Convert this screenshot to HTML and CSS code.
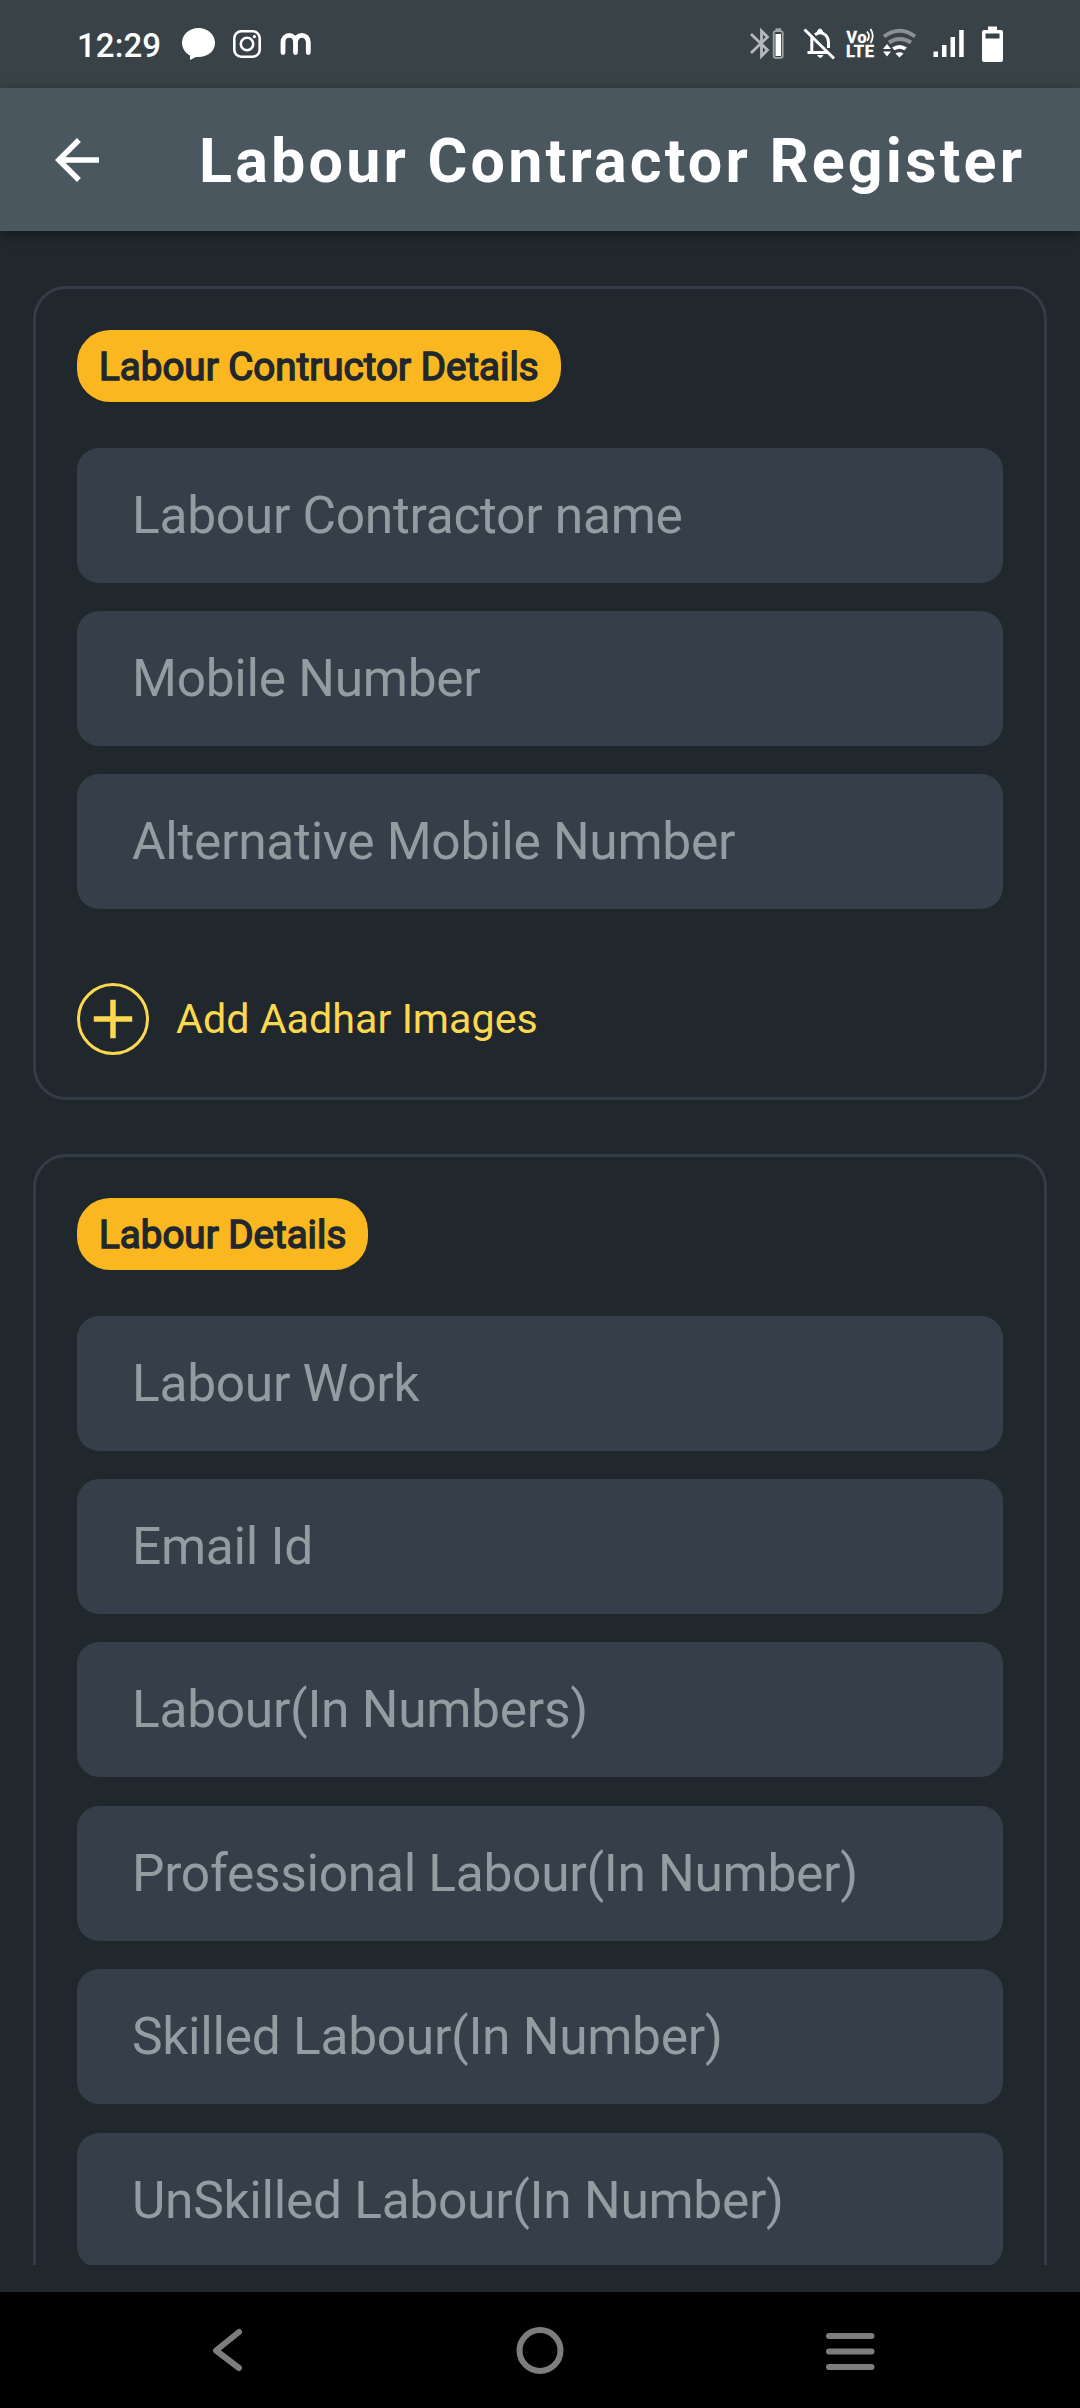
FILE: index.html
```html
<!DOCTYPE html>
<html lang="en">
<head>
<meta charset="utf-8">
<title>Labour Contractor Register</title>
<link rel="stylesheet" href="styles.css">
</head>
<body>
<div class="status-bar">
  <div class="status-left">
    <span class="clock">12:29</span>
    <svg class="notif" width="132" height="34" viewBox="182 27 132 34">
      <path fill="#fff" d="M198.500 28c-9.200 0-16.500 6.500-16.500 14.800 0 5.400 3.200 10.200 8 12.700v4.500l6-3.100c12 .9 19-5.500 19-14.100 0-8.300-7.300-14.800-16.500-14.800z"/>
      <g fill="none" stroke="#fff" stroke-width="2.600">
        <rect x="234.300" y="31.300" width="25.400" height="25.400" rx="7"/>
        <circle cx="247" cy="44" r="6.200"/>
      </g>
      <circle cx="254.400" cy="36.600" r="1.700" fill="#fff"/>
      <path fill="none" stroke="#fff" stroke-width="4.800" stroke-linecap="round" d="M283 52.500v-10.500a6.200 6.500 0 0 1 12.500 0v10.500m0-10.500a6.200 6.500 0 0 1 12.800 0v10.500"/>
    </svg>
  </div>
  <svg class="indicators" width="256" height="38" viewBox="749 25 256 38">
    <path fill="none" stroke="#b4b9bb" stroke-width="2.800" d="M751 34l16.500 16-6 6v-25l6 6-16.500 16"/>
    <rect x="773.700" y="31.200" width="9" height="26.600" rx="2" fill="none" stroke="#a1a6a9" stroke-width="1.800"/>
    <path fill="#a1a6a9" d="M775.500 28.300h5.500v2.700h-5.500z"/>
    <path fill="#fff" d="M775.500 34h5.500v22h-5.500z"/>
    <g fill="none" stroke="#fff" stroke-width="3">
      <path d="M804.500 29.500l29.500 29"/>
      <path d="M811.800 37.500v15M807.500 52.500h20M815 34.800c6-4.500 13.500-.5 13.500 8.200v5"/>
    </g>
    <path fill="#fff" d="M817 33.500v-2.500q3-5 6 0v2.500zM817 55h6.500q-3.200 6-6.500 0z"/>
    <text class="volte" x="846.500" y="42.500" textLength="20">Vo</text>
    <text class="lte" x="846" y="57.300" textLength="28">LTE</text>
    <path fill="none" stroke="#fff" stroke-width="1.800" d="M867 31.500q4 4.500 0 9.500M870.500 29q4.500 7 0 14"/>
    <g fill="none" stroke="#8b9093" stroke-width="4">
      <path d="M884 36.500q16-11.500 31 0M889 42.500q11-7 22 0"/>
    </g>
    <path fill="#fff" d="M892 47.500q7.500-5 15 0l-2.600 2.800q-5-3-9.800 0zM895.500 53.500q4-2.500 8 0l-4 4zM883 49l4-5 4 5zM883 51.500h8l-4 5z"/>
    <path fill="#fff" d="M933.500 51.500h4.500v5.500h-4.500zM942 45h4.500v12h-4.500zM950.500 37h4.500v20h-4.500zM959.200 30h4.500v27h-4.500z"/>
    <path fill="#fff" fill-rule="evenodd" d="M988 26.500h9v3.500h4q2 0 2 2v28q0 2-2 2h-17q-2 0-2-2v-28q0-2 2-2h4zM985.500 33.500v5h14v-5z"/>
  </svg>
</div>
<header class="app-bar">
  <svg class="back" width="66" height="66" viewBox="0 0 24 24"><path fill="#fff" d="M20 11H7.830l5.590-5.590L12 4l-8 8 8 8 1.410-1.410L7.830 13H20v-2z"/></svg>
  <h1 class="title">Labour Contractor Register</h1>
</header>
<main class="content">
  <section class="card">
    <h2 class="badge">Labour Contructor Details</h2>
    <div class="fields">
      <div class="field">Labour Contractor name</div>
      <div class="field">Mobile Number</div>
      <div class="field">Alternative Mobile Number</div>
    </div>
    <div class="add-row">
      <span class="add-circle"><svg width="66" height="66" viewBox="0 0 24 24"><path fill="currentColor" d="M19 13h-6v6h-2v-6H5v-2h6V5h2v6h6z"/></svg></span>
      <span class="add-label">Add Aadhar Images</span>
    </div>
  </section>
  <section class="card">
    <h2 class="badge">Labour Details</h2>
    <div class="fields">
      <div class="field">Labour Work</div>
      <div class="field">Email Id</div>
      <div class="field">Labour(In Numbers)</div>
      <div class="field">Professional Labour(In Number)</div>
      <div class="field">Skilled Labour(In Number)</div>
      <div class="field">UnSkilled Labour(In Number)</div>
    </div>
  </section>
</main>
<nav class="nav-bar">
  <svg width="60" height="60" viewBox="0 0 60 60"><path d="M39 12L16 30.500 39 48"/></svg>
  <svg width="60" height="60" viewBox="0 0 60 60"><circle cx="30" cy="30.500" r="20.500"/></svg>
  <svg width="60" height="60" viewBox="0 0 60 60"><path d="M9 16h42.500M9 31.500h42.500M9 47h42.500"/></svg>
</nav>
</body>
</html>
```
FILE: styles.css
```css
* { box-sizing: border-box; margin: 0; padding: 0; }
body {
  width: 1080px;
  height: 2408px;
  display: flex;
  flex-direction: column;
  overflow: hidden;
  background: #21282d;
  font-family: Roboto, "Liberation Sans", sans-serif;
}
svg { display: block; flex: none; }
.status-bar {
  flex: none;
  height: 88px;
  background: #384247;
  display: flex;
  justify-content: space-between;
  padding: 0 75px 0 77px;
}
.status-left { display: flex; }
.clock {
  width: 105px;
  font-size: 33px;
  font-weight: 500;
  letter-spacing: .1px;
  line-height: 39px;
  margin-top: 26px;
  color: #fff;
}
.notif { margin-top: 27px; }
.indicators { margin-top: 25px; }
.volte, .lte {
  fill: #fff;
  stroke: #fff;
  stroke-width: .4px;
  font-family: Roboto, sans-serif;
  font-weight: 700;
}
.volte { font-size: 16px; }
.lte { font-size: 16.500px; }
.app-bar {
  flex: none;
  position: relative;
  height: 143px;
  background: #4b575f;
  box-shadow: 0 4px 12px rgba(0, 0, 0, .4);
  display: flex;
  align-items: center;
  gap: 89px;
  padding-left: 44px;
}
.title {
  font-size: 61px;
  font-weight: 700;
  letter-spacing: 3.200px;
  line-height: 72px;
  margin-top: 2px;
  white-space: nowrap;
  color: #fff;
}
.content {
  flex: none;
  height: 2034px;
  overflow: hidden;
  padding: 55px 33px 0;
  display: flex;
  flex-direction: column;
  gap: 54px;
}
.card {
  flex: none;
  border: 3px solid #333c48;
  border-radius: 33px;
  padding: 41px 41px 41.500px;
}
.badge {
  width: fit-content;
  height: 72px;
  border-radius: 33px;
  background: #fab720;
  color: #21282d;
  padding: 0 22px;
  font-size: 38.500px;
  font-weight: 400;
  letter-spacing: .030px;
  line-height: 73px;
  white-space: nowrap;
  -webkit-text-stroke: 1.500px #21282d;
}
.fields {
  display: flex;
  flex-direction: column;
  gap: 28.400px;
  margin-top: 45.700px;
}
.field {
  height: 135px;
  border-radius: 22px;
  background: #353f4a;
  color: #929ca1;
  padding-left: 55px;
  font-size: 51.500px;
  letter-spacing: -.300px;
  line-height: 135px;
  white-space: nowrap;
}
.add-row {
  display: flex;
  align-items: center;
  gap: 27px;
  height: 72px;
  margin-top: 74px;
  color: #fbd850;
}
.add-circle {
  width: 72px;
  height: 72px;
  border: 3px solid;
  border-radius: 50%;
  display: flex;
  align-items: center;
  justify-content: center;
}
.add-label { font-size: 41.250px; }
.nav-bar {
  flex: none;
  height: 116px;
  margin-top: 27px;
  background: #000;
  display: flex;
  justify-content: space-between;
  align-items: center;
  padding: 0 200px;
}
.nav-bar svg {
  fill: none;
  stroke: #7d7d7d;
  stroke-width: 6;
  stroke-linecap: round;
  stroke-linejoin: round;
}
```
